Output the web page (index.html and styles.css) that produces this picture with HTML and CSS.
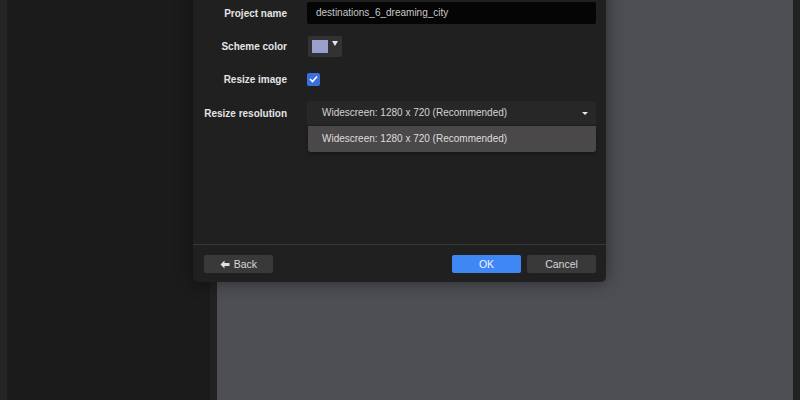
FILE: index.html
```html
<!DOCTYPE html>
<html lang="en">
<head>
    <meta charset="UTF-8">
    <title>New project</title>
    <link rel="stylesheet" href="styles.css">
</head>
<body>
    <div class="app">
        <div class="sidebar"></div>
        <div class="gutter"></div>
        <div class="workspace"></div>
        <div class="edge"></div>
    </div>

    <div class="dialog">
        <div class="dialog-body">
            <div class="form-row">
                <label class="form-label">Project name</label>
                <div class="text-input">destinations_6_dreaming_city</div>
            </div>
            <div class="form-row">
                <label class="form-label">Scheme color</label>
                <div class="color-btn">
                    <span class="swatch"></span>
                    <span class="caret-small"></span>
                </div>
            </div>
            <div class="form-row">
                <label class="form-label">Resize image</label>
                <div class="checkbox">
                    <svg width="9" height="8" viewBox="0 0 9 8">
                        <path d="M1 4 L3.5 6.5 L8 1.5" fill="none" stroke="#fff" stroke-width="1.6"/>
                    </svg>
                </div>
            </div>
            <div class="form-row resolution">
                <label class="form-label">Resize resolution</label>
                <div class="select">
                    <span>Widescreen: 1280 x 720 (Recommended)</span>
                    <span class="select-caret"></span>
                    <div class="select-menu">
                        <div class="option">Widescreen: 1280 x 720 (Recommended)</div>
                    </div>
                </div>
            </div>
        </div>
        <div class="dialog-footer">
            <button class="btn">
                <svg class="arrow" width="10" height="9" viewBox="0 0 10 9">
                    <path d="M4.5 0.5 L0.5 4.5 L4.5 8.5 L4.5 6 L9.5 6 L9.5 3 L4.5 3 Z" fill="#e0e0e0"/>
                </svg>
                Back
            </button>
            <div class="spacer"></div>
            <button class="btn primary">OK</button>
            <button class="btn">Cancel</button>
        </div>
    </div>
</body>
</html>
```

FILE: styles.css
```css
html, body {
    margin: 0;
    padding: 0;
    width: 800px;
    height: 400px;
    overflow: hidden;
    font-family: 'Liberation Sans', Arial, sans-serif;
    font-size: 10px;
    background: #1b1a1b;
}
.app {
    display: flex;
    height: 400px;
}
.sidebar {
    width: 210px;
    background: #1c1b1c;
    border-left: 7px solid #262526;
    box-sizing: border-box;
}
.gutter {
    width: 7px;
    background: #222122;
}
.workspace {
    flex: 1;
    background: #4e4f55;
}
.edge {
    width: 7px;
    background: #232223;
}

/* dialog lies over the workspace */
.dialog {
    position: absolute;
    left: 193px;
    top: -40px;
    width: 413px;
    background: #212021;
    border-radius: 0 0 5px 5px;
    box-shadow: 0 0 18px rgba(0, 0, 0, 0.45);
}
.dialog-body {
    height: 285px;
    padding-top: 42px;
    box-sizing: border-box;
    display: flex;
    flex-direction: column;
    gap: 11px;
    border-bottom: 1px solid #383738;
}
.form-row {
    display: flex;
    align-items: center;
    height: 22px;
}
.form-row.resolution {
    margin-top: 1px;
}
.form-label {
    width: 94px;
    text-align: right;
    font-weight: bold;
    color: #e4e4e4;
    margin-right: 20px;
}
.text-input {
    width: 289px;
    height: 22px;
    line-height: 22px;
    box-sizing: border-box;
    padding-left: 9px;
    background: #050505;
    color: #c8c8c8;
    border-radius: 2px;
}
.color-btn {
    display: flex;
    align-items: center;
    width: 34px;
    height: 21px;
    margin-left: 1px;
    background: #333233;
    border-radius: 2px;
    box-sizing: border-box;
    padding-left: 4px;
}
.swatch {
    width: 16px;
    height: 13px;
    background: #9c9ecd;
}
.caret-small {
    margin-left: 4px;
    margin-top: -5px;
    border-left: 3px solid transparent;
    border-right: 3px solid transparent;
    border-top: 5px solid #e8e8e8;
}
.checkbox {
    width: 13px;
    height: 13px;
    background: #3b70dc;
    border-radius: 2px;
    display: flex;
    align-items: center;
    justify-content: center;
}
.select {
    position: relative;
    width: 289px;
    height: 24px;
    line-height: 24px;
    box-sizing: border-box;
    padding-left: 15px;
    background: #282728;
    color: #d4d4d4;
    border-radius: 3px;
}
.select-caret {
    position: absolute;
    right: 8px;
    top: 11px;
    border-left: 3px solid transparent;
    border-right: 3px solid transparent;
    border-top: 3px solid #e8e8e8;
}
.select-menu {
    position: absolute;
    left: 1px;
    right: 0;
    top: 25px;
    background: #4a4849;
    border-radius: 0 0 3px 3px;
    box-shadow: 0 2px 4px rgba(0, 0, 0, 0.3);
}
.option {
    height: 26px;
    line-height: 26px;
    padding-left: 14px;
    color: #dedede;
}
.dialog-footer {
    display: flex;
    align-items: center;
    gap: 6px;
    height: 37px;
    padding: 0 10px 0 11px;
}
.spacer {
    flex: 1;
}
.btn {
    width: 69px;
    height: 18px;
    border: none;
    border-radius: 2px;
    background: #3a393a;
    color: #d8d8d8;
    font-family: 'Liberation Sans', Arial, sans-serif;
    font-size: 10.5px;
    padding: 0;
}
.btn.primary {
    background: #3f87f5;
    color: #eef4ff;
}
.arrow {
    vertical-align: -1px;
    margin-right: 1px;
}
```
